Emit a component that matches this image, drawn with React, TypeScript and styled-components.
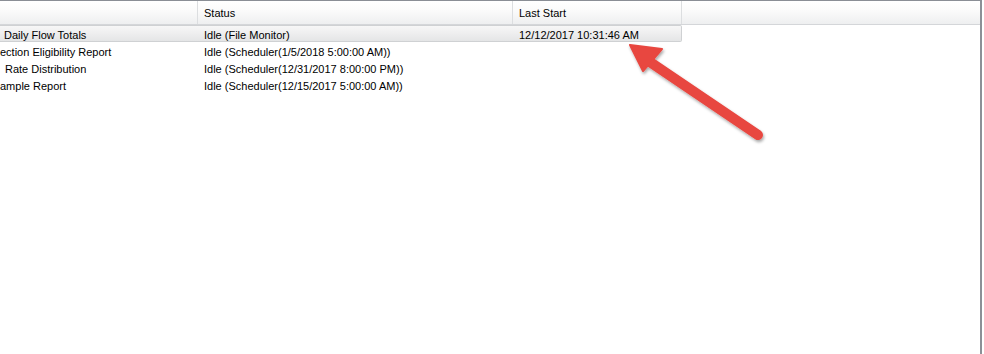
import React from 'react'
import styled, { createGlobalStyle } from 'styled-components'

type job = {
  id: string
  name: string
  indent: number
  status: string
  lastStart: string
  selected?: boolean
}

const jobs: job[] = [
  { id: 'j1', name: 'Daily Flow Totals', indent: 4, status: 'Idle (File Monitor)', lastStart: '12/12/2017 10:31:46 AM', selected: true },
  { id: 'j2', name: 'ection Eligibility Report', indent: 0, status: 'Idle (Scheduler(1/5/2018 5:00:00 AM))', lastStart: '' },
  { id: 'j3', name: 'Rate Distribution', indent: 5, status: 'Idle (Scheduler(12/31/2017 8:00:00 PM))', lastStart: '' },
  { id: 'j4', name: 'ample Report', indent: 0, status: 'Idle (Scheduler(12/15/2017 5:00:00 AM))', lastStart: '' },
]

const GlobalStyle = createGlobalStyle`
  html, body {
    margin: 0;
    padding: 0;
    background: #ffffff;
  }
  body {
    font-family: Tahoma, "Liberation Sans", Arial, sans-serif;
    font-size: 11px;
    color: #000;
  }
`

const Arrow = () => (
  <ArrowSvg width="984" height="354" viewBox="0 0 984 354">
    <defs>
      <filter id="shadow" x="-20%" y="-20%" width="140%" height="140%">
        <feDropShadow dx="1" dy="2" stdDeviation="1.5" floodColor="#000" floodOpacity="0.35" />
      </filter>
    </defs>
    <g filter="url(#shadow)" fill="#e8463f" stroke="#e8463f">
      <line x1="758" y1="135" x2="650" y2="62" strokeWidth="10" strokeLinecap="round" />
      <polygon points="630,45 662,49 643,71" strokeWidth="2" strokeLinejoin="round" />
    </g>
  </ArrowSvg>
)

const App = () => {
  return (
    <>
      <GlobalStyle />
      <Frame>
        <Header>
          <HeadCell width={198} />
          <HeadCell width={315}>Status</HeadCell>
          <HeadCell width={169}>Last Start</HeadCell>
          <HeadFill />
        </Header>
        <Rows>
          {jobs.map((j) => (
            <Row key={j.id} selected={j.selected}>
              <NameCell style={{ paddingLeft: j.indent }}>{j.name}</NameCell>
              <Cell width={315}>{j.status}</Cell>
              <Cell width={169}>{j.lastStart}</Cell>
            </Row>
          ))}
        </Rows>
        <Arrow />
      </Frame>
    </>
  )
}

const Frame = styled.div`
  position: relative;
  width: 982px;
  height: 354px;
  box-sizing: border-box;
  border-top: 1px solid #8a8e95;
  border-right: 2px solid #8c9097;
  background: #fff;
  overflow: hidden;
`

const Header = styled.div`
  display: flex;
  height: 24px;
  box-sizing: border-box;
  border-bottom: 1px solid #d4d6d9;
  background: linear-gradient(to bottom, #ffffff 0%, #fbfbfb 40%, #eeeff0 100%);
`

const HeadCell = styled.div<{ width: number }>`
  flex: 0 0 ${(p) => p.width}px;
  box-sizing: border-box;
  border-right: 1px solid #dcdee0;
  padding: 5px 0 0 6px;
  line-height: 14px;
  white-space: nowrap;
`

const HeadFill = styled.div`
  flex: 1;
`

const Rows = styled.div`
  display: flex;
  flex-direction: column;
`

const Row = styled.div<{ selected?: boolean }>`
  display: flex;
  width: 682px;
  height: 17px;
  box-sizing: border-box;
  padding-top: 2px;
  line-height: 14px;
  border: 1px solid ${(p) => (p.selected ? '#cfd1d3' : 'transparent')};
  border-left: none;
  border-radius: 0 2px 2px 0;
  background: ${(p) =>
    p.selected ? 'linear-gradient(to bottom, #f7f7f7 0%, #ededee 55%, #e4e5e6 100%)' : 'transparent'};
`

const NameCell = styled.div`
  flex: 0 0 198px;
  box-sizing: border-box;
  white-space: nowrap;
  overflow: hidden;
`

const Cell = styled.div<{ width: number }>`
  flex: 0 0 ${(p) => p.width}px;
  box-sizing: border-box;
  padding-left: 6px;
  white-space: nowrap;
  overflow: hidden;
`

const ArrowSvg = styled.svg`
  position: absolute;
  left: 0;
  top: -1px;
  pointer-events: none;
`

export default App
